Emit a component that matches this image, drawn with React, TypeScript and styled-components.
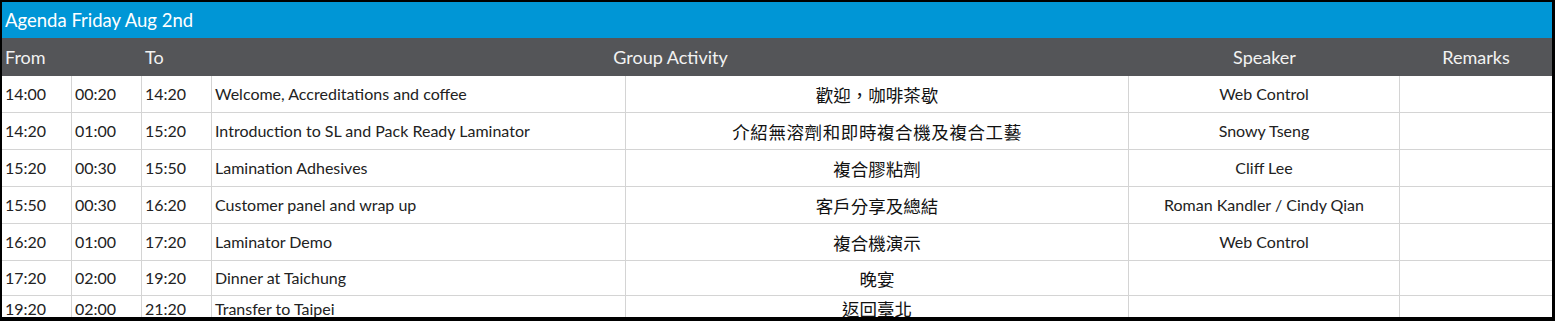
import styled, { createGlobalStyle } from "styled-components";

const GlobalStyle = createGlobalStyle`
  html, body {
    margin: 0;
    padding: 0;
    background: #ffffff;
  }
`;

interface IAgendaRow {
  from: string;
  duration: string;
  to: string;
  activity: string;
  activityZh: string;
  speaker: string;
  remarks: string;
  height: number;
  last?: boolean;
  wideZh?: boolean;
}

const rows: IAgendaRow[] = [
  { from: "14:00", duration: "00:20", to: "14:20", activity: "Welcome, Accreditations and coffee", activityZh: "歡迎，咖啡茶歇", speaker: "Web Control", remarks: "", height: 37 },
  { from: "14:20", duration: "01:00", to: "15:20", activity: "Introduction to SL and Pack Ready Laminator", activityZh: "介紹無溶劑和即時複合機及複合工藝", speaker: "Snowy Tseng", remarks: "", height: 37, wideZh: true },
  { from: "15:20", duration: "00:30", to: "15:50", activity: "Lamination Adhesives", activityZh: "複合膠粘劑", speaker: "Cliff Lee", remarks: "", height: 37 },
  { from: "15:50", duration: "00:30", to: "16:20", activity: "Customer panel and wrap up", activityZh: "客戶分享及總結", speaker: "Roman Kandler / Cindy Qian", remarks: "", height: 37 },
  { from: "16:20", duration: "01:00", to: "17:20", activity: "Laminator Demo", activityZh: "複合機演示", speaker: "Web Control", remarks: "", height: 37 },
  { from: "17:20", duration: "02:00", to: "19:20", activity: "Dinner at Taichung", activityZh: "晚宴", speaker: "", remarks: "", height: 35 },
  { from: "19:20", duration: "02:00", to: "21:20", activity: "Transfer to Taipei", activityZh: "返回臺北", speaker: "", remarks: "", height: 21, last: true },
];

const COLUMNS = "70px 70px 70px 414px 503px 271px 1fr";

const App: React.FC = () => {
  return (
    <>
      <GlobalStyle />
      <Frame>
        <TitleBar>Agenda Friday Aug 2nd</TitleBar>
        <HeaderRow>
          <HeadCell $span={2}>From</HeadCell>
          <HeadCell>To</HeadCell>
          <HeadCell $span={2} $center>
            Group Activity
          </HeadCell>
          <HeadCell $center>Speaker</HeadCell>
          <HeadCell $center>Remarks</HeadCell>
        </HeaderRow>
        {rows.map((row) => (
          <BodyRow key={row.from} $height={row.height} $last={row.last}>
            <Cell>{row.from}</Cell>
            <Cell>{row.duration}</Cell>
            <Cell>{row.to}</Cell>
            <Cell>{row.activity}</Cell>
            <Cell $center $zh $wide={row.wideZh}>
              {row.activityZh}
            </Cell>
            <Cell $center>{row.speaker}</Cell>
            <Cell $last>{row.remarks}</Cell>
          </BodyRow>
        ))}
      </Frame>
    </>
  );
};

const Frame = styled.div`
  box-sizing: border-box;
  width: 1555px;
  height: 321px;
  overflow: hidden;
  border-style: solid;
  border-color: #000000;
  border-width: 2px 3px 4px 2px;
  background: #ffffff;
  font-family: Lato, "Noto Sans CJK TC", sans-serif;
  color: #222222;
`;

const TitleBar = styled.div`
  height: 36px;
  display: flex;
  align-items: center;
  padding-left: 3px;
  background: #0096d6;
  color: #ffffff;
  font-size: 18.5px;
`;

const HeaderRow = styled.div`
  display: grid;
  grid-template-columns: ${COLUMNS};
  height: 38px;
  background: #545558;
  color: #f2f2f2;
  font-size: 18px;
`;

const HeadCell = styled.div<{ $span?: number; $center?: boolean }>`
  grid-column: span ${({ $span }) => $span ?? 1};
  display: flex;
  align-items: center;
  justify-content: ${({ $center }) => ($center ? "center" : "flex-start")};
  padding: 0 3px;
`;

const BodyRow = styled.div<{ $height: number; $last?: boolean }>`
  display: grid;
  grid-template-columns: ${COLUMNS};
  height: ${({ $height }) => $height}px;
  box-sizing: border-box;
  border-bottom: ${({ $last }) => ($last ? "none" : "1px solid #d4d4d4")};
`;

const Cell = styled.div<{
  $center?: boolean;
  $zh?: boolean;
  $wide?: boolean;
  $last?: boolean;
}>`
  display: flex;
  align-items: center;
  justify-content: ${({ $center }) => ($center ? "center" : "flex-start")};
  padding: ${({ $zh }) => ($zh ? "0 3px" : "0 3px 1px")};
  box-sizing: border-box;
  white-space: nowrap;
  border-right: ${({ $last }) => ($last ? "none" : "1px solid #d4d4d4")};
  font-family: ${({ $zh }) =>
    $zh ? '"Noto Sans CJK TC", sans-serif' : 'Lato, "Noto Sans CJK TC", sans-serif'};
  font-size: ${({ $zh }) => ($zh ? "17.5px" : "16px")};
  letter-spacing: ${({ $wide }) => ($wide ? "0.6px" : "0")};
  color: ${({ $zh }) => ($zh ? "#111111" : "#222222")};
`;

export default App;
